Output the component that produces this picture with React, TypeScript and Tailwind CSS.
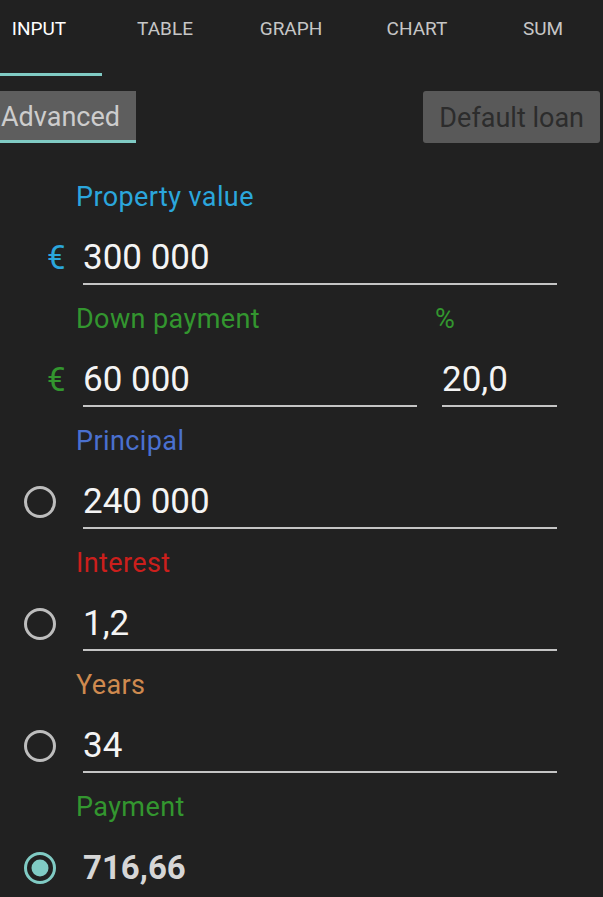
import React from "react";

const TABS = ["INPUT", "TABLE", "GRAPH", "CHART", "SUM"];

function Radio({ checked }: { checked?: boolean }) {
  return (
    <svg width="34" height="34" viewBox="0 0 34 34">
      <circle cx="17" cy="17" r="14.5" fill="none" stroke={checked ? "#80cbc4" : "#bdbdbd"} strokeWidth="3" />
      {checked && <circle cx="17" cy="17" r="8.5" fill="#80cbc4" />}
    </svg>
  );
}

function Group({
  label,
  labelColor,
  icon,
  value,
  line = true,
  bold = false,
}: {
  label: string;
  labelColor: string;
  icon: React.ReactNode;
  value: string;
  line?: boolean;
  bold?: boolean;
}) {
  return (
    <div className="flex flex-col h-[122px]">
      <div className="h-[40px] flex items-center pl-[76px] text-[27px] tracking-[0.4px]" style={{ color: labelColor }}>
        {label}
      </div>
      <div className="mt-[21px] flex items-start">
        <div className="w-[83px] h-[40px] flex items-center">{icon}</div>
        <div className="flex flex-col w-[474px]">
          <div
            className={
              "h-[40px] flex items-center " +
              (bold ? "text-[33px] font-bold text-[#d6d6d6]" : "text-[35px] text-[#f4f4f4]")
            }
          >
            {value}
          </div>
          {line && <div className="mt-[5px] h-[2px] bg-[#c4c4c4]" />}
        </div>
      </div>
    </div>
  );
}

export default function App() {
  return (
    <div className="w-[603px] h-[897px] overflow-hidden bg-[#212121] font-['Roboto',sans-serif]">
      <div className="flex ml-[-24px] h-[59px]">
        {TABS.map((t, i) => (
          <div
            key={t}
            className={
              "w-[126px] shrink-0 flex items-center justify-center text-[19px] " +
              (i === 0 ? "text-white" : "text-[#c6c6c6]")
            }
          >
            {t}
          </div>
        ))}
      </div>
      <div className="mt-[14px] ml-[-24px] w-[126px] h-[3px] bg-[#80cbc4]" />
      <div className="mt-[15px] flex justify-between items-start">
        <div className="ml-[-13px] h-[52px] bg-[#5e5e5e] border-b-[3px] border-[#80cbc4] pl-[14px] pr-[16px] pt-[3px] flex items-center text-[27px] text-[#cdcdcd]">
          Advanced
        </div>
        <div className="mr-[3px] h-[52px] bg-[#595959] rounded-[3px] px-[16px] pt-[2px] flex items-center text-[27px] text-[#2c2c2c]">
          Default loan
        </div>
      </div>
      <div className="mt-[34px] flex flex-col">
        <Group
          label="Property value"
          labelColor="#2ba6dc"
          icon={<span className="pl-[47px] text-[33px] text-[#2ba6dc]">€</span>}
          value="300 000"
        />
        <div className="flex flex-col h-[122px]">
          <div className="h-[40px] flex items-center text-[27px] tracking-[0.4px] text-[#33962f]">
            <span className="pl-[76px] w-[435px]">Down payment</span>
            <span>%</span>
          </div>
          <div className="mt-[21px] flex items-start">
            <div className="w-[83px] h-[40px] flex items-center">
              <span className="pl-[47px] text-[33px] text-[#33962f]">€</span>
            </div>
            <div className="flex flex-col w-[334px]">
              <div className="h-[40px] flex items-center text-[35px] text-[#f4f4f4]">60 000</div>
              <div className="mt-[5px] h-[2px] bg-[#c4c4c4]" />
            </div>
            <div className="ml-[25px] flex flex-col w-[115px]">
              <div className="h-[40px] flex items-center text-[35px] text-[#f4f4f4]">20,0</div>
              <div className="mt-[5px] h-[2px] bg-[#c4c4c4]" />
            </div>
          </div>
        </div>
        <Group
          label="Principal"
          labelColor="#4a70cf"
          icon={<span className="pl-[23px] flex"><Radio /></span>}
          value="240 000"
        />
        <Group
          label="Interest"
          labelColor="#cc1f1c"
          icon={<span className="pl-[23px] flex"><Radio /></span>}
          value="1,2"
        />
        <Group
          label="Years"
          labelColor="#cf8a4f"
          icon={<span className="pl-[23px] flex"><Radio /></span>}
          value="34"
        />
        <Group
          label="Payment"
          labelColor="#33962f"
          icon={<span className="pl-[23px] flex"><Radio checked /></span>}
          value="716,66"
          line={false}
          bold
        />
      </div>
    </div>
  );
}
